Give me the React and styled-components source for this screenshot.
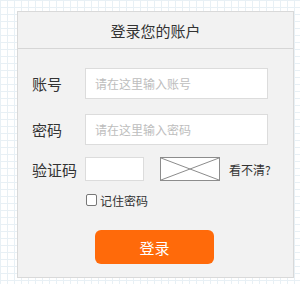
import React from 'react';
import styled, { createGlobalStyle } from 'styled-components';

const Global = createGlobalStyle`
    html, body {
        margin: 0;
        padding: 0;
    }
    body {
        width: 300px;
        height: 284px;
        overflow: hidden;
        background-color: #ffffff;
        background-image:
            linear-gradient(to right, #e8f0f5 1px, transparent 1px),
            linear-gradient(to bottom, #e8f0f5 1px, transparent 1px);
        background-size: 7px 7px;
        font-family: "Noto Sans CJK SC", "Noto Sans", sans-serif;
    }
`;

const Panel = styled.section`
    box-sizing: border-box;
    width: 277px;
    height: 267px;
    margin: 11px 0 0 17px;
    background: #f2f2f2;
    border: 1px solid #d9d9d9;
    display: flex;
    flex-direction: column;
`;

const Header = styled.header`
    height: 36px;
    flex-shrink: 0;
    border-bottom: 1px solid #d6d6d6;
    display: flex;
    align-items: center;
    justify-content: center;
    font-size: 15px;
    color: #333;
`;

const Body = styled.div`
    padding: 19px 20px 0 14px;
    display: flex;
    flex-direction: column;
`;

const Row = styled.div`
    display: flex;
    align-items: center;
    height: ${p => p.h || 31}px;
    margin-bottom: ${p => p.mb || 0}px;
`;

const Label = styled.label`
    width: 53px;
    flex-shrink: 0;
    font-size: 15px;
    color: #333;
`;

const Input = styled.input`
    box-sizing: border-box;
    flex-shrink: 0;
    width: ${p => p.w || 183}px;
    height: ${p => p.h || 31}px;
    border: 1px solid #dcdcdc;
    background: #fff;
    padding: 0 0 0 9px;
    margin: 0;
    font-family: inherit;
    font-size: 12px;
    outline: none;
    &::placeholder {
        color: #bdbdbd;
    }
`;

const Captcha = styled.div`
    box-sizing: border-box;
    flex-shrink: 0;
    width: 60px;
    height: 24px;
    margin-left: 16px;
    border: 1px solid #8c8c8c;
    background: #fff;
    svg {
        display: block;
    }
`;

const Refresh = styled.span`
    margin-left: 9px;
    white-space: nowrap;
    font-size: 12px;
    color: #333;
`;

const Remember = styled.label`
    display: flex;
    align-items: center;
    margin-left: 54px;
    height: 14px;
    font-size: 12px;
    color: #333;
    gap: 3px;
`;

const Check = styled.span`
    box-sizing: border-box;
    width: 11px;
    height: 12px;
    border: 1px solid #777;
    border-radius: 2px;
    background: #fff;
`;

const Button = styled.button`
    align-self: flex-start;
    margin: 23px 0 0 63px;
    width: 119px;
    height: 34px;
    border: none;
    border-radius: 6px;
    background: #ff6a0a;
    color: #fff;
    font-family: inherit;
    font-size: 15px;
    cursor: pointer;
`;

function App() {
    return (
        <>
            <Global />
            <Panel>
                <Header>登录您的账户</Header>
                <Body>
                    <Row mb={15}>
                        <Label>账号</Label>
                        <Input placeholder="请在这里输入账号" />
                    </Row>
                    <Row mb={12}>
                        <Label>密码</Label>
                        <Input type="text" placeholder="请在这里输入密码" />
                    </Row>
                    <Row h={24} mb={12}>
                        <Label>验证码</Label>
                        <Input w={59} h={24} />
                        <Captcha>
                            <svg width="58" height="22" viewBox="0 0 58 22">
                                <line x1="0" y1="0" x2="58" y2="22" stroke="#8c8c8c" strokeWidth="1" />
                                <line x1="58" y1="0" x2="0" y2="22" stroke="#8c8c8c" strokeWidth="1" />
                            </svg>
                        </Captcha>
                        <Refresh>看不清?</Refresh>
                    </Row>
                    <Remember>
                        <Check />
                        记住密码
                    </Remember>
                    <Button>登录</Button>
                </Body>
            </Panel>
        </>
    );
}

export default App;
